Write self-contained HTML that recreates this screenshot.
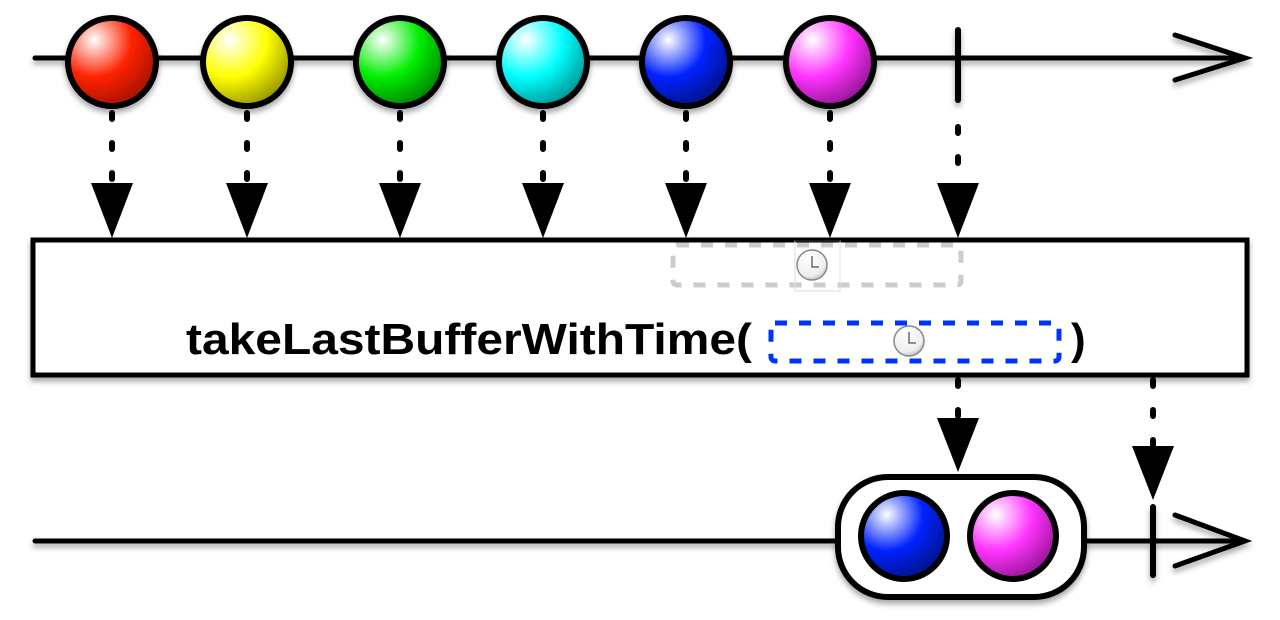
<!DOCTYPE html><html><head><style>html,body{margin:0;padding:0;background:#fff}svg{display:block}</style></head><body>
<svg width="1280" height="620" viewBox="0 0 1280 620" xmlns="http://www.w3.org/2000/svg">
<defs>
<filter id="sh" x="-20%" y="-20%" width="140%" height="160%"><feDropShadow dx="0" dy="4" stdDeviation="3" flood-opacity="0.35"/></filter>
<radialGradient id="gr" cx="0.3" cy="0.25" r="0.85"><stop offset="0" stop-color="#fff"/><stop offset="0.5" stop-color="#ff2200"/><stop offset="1" stop-color="#991100"/></radialGradient>
<radialGradient id="gy" cx="0.3" cy="0.25" r="0.85"><stop offset="0" stop-color="#fff"/><stop offset="0.5" stop-color="#ffff00"/><stop offset="1" stop-color="#888800"/></radialGradient>
<radialGradient id="gg" cx="0.3" cy="0.25" r="0.85"><stop offset="0" stop-color="#fff"/><stop offset="0.5" stop-color="#00ee00"/><stop offset="1" stop-color="#007700"/></radialGradient>
<radialGradient id="gc" cx="0.3" cy="0.25" r="0.85"><stop offset="0" stop-color="#fff"/><stop offset="0.5" stop-color="#00ffff"/><stop offset="1" stop-color="#008888"/></radialGradient>
<radialGradient id="gb" cx="0.3" cy="0.25" r="0.85"><stop offset="0" stop-color="#fff"/><stop offset="0.5" stop-color="#0022ff"/><stop offset="1" stop-color="#001177"/></radialGradient>
<radialGradient id="gm" cx="0.3" cy="0.25" r="0.85"><stop offset="0" stop-color="#fff"/><stop offset="0.5" stop-color="#ff33ff"/><stop offset="1" stop-color="#881188"/></radialGradient>
<radialGradient id="gk" cx="0.4" cy="0.3" r="0.8"><stop offset="0" stop-color="#fff"/><stop offset="0.7" stop-color="#eee"/><stop offset="1" stop-color="#aaa"/></radialGradient>
</defs>
<g stroke="#000" stroke-width="5" fill="none" stroke-linecap="round" filter="url(#sh)">
<line x1="35" y1="58" x2="1245" y2="58"/>
<polyline points="1175,35 1245,58 1175,80"/>
<line x1="958" y1="30" x2="958" y2="100" stroke-width="6"/>
</g>
<g stroke="#000" stroke-width="6" filter="url(#sh)">
<circle cx="112" cy="62" r="44" fill="url(#gr)"/>
<circle cx="247" cy="62" r="44" fill="url(#gy)"/>
<circle cx="400" cy="62" r="44" fill="url(#gg)"/>
<circle cx="543" cy="62" r="44" fill="url(#gc)"/>
<circle cx="686" cy="62" r="44" fill="url(#gb)"/>
<circle cx="830" cy="62" r="44" fill="url(#gm)"/>
</g>
<g stroke="#000" stroke-width="6" stroke-linecap="round" stroke-dasharray="6 24">
<line x1="112" y1="113" x2="112" y2="180"/><line x1="247" y1="113" x2="247" y2="180"/>
<line x1="400" y1="113" x2="400" y2="180"/><line x1="543" y1="113" x2="543" y2="180"/>
<line x1="686" y1="113" x2="686" y2="180"/><line x1="830" y1="113" x2="830" y2="180"/>
<line x1="958" y1="127" x2="958" y2="180"/>
<line x1="958" y1="380" x2="958" y2="418"/>
<line x1="1153" y1="380" x2="1153" y2="445"/>
</g>
<g fill="#000">
<polygon points="91,183 133,183 112,238"/><polygon points="226,183 268,183 247,238"/>
<polygon points="379,183 421,183 400,238"/><polygon points="522,183 564,183 543,238"/>
<polygon points="665,183 707,183 686,238"/><polygon points="809,183 851,183 830,238"/>
<polygon points="937,183 979,183 958,238"/>
<polygon points="937,418 979,418 958,472"/>
<polygon points="1132,446 1174,446 1153,500"/>
</g>
<rect x="33" y="240" width="1214" height="135" fill="#fff" stroke="#000" stroke-width="5" filter="url(#sh)"/>
<rect x="673" y="245" width="288" height="40" rx="4" fill="none" stroke="#ccc" stroke-width="5" stroke-dasharray="12 12"/>
<rect x="795" y="241" width="45" height="50" fill="none" stroke="#ddd" stroke-width="1"/>
<line x1="795" y1="241" x2="840" y2="241" stroke="#333" stroke-width="1"/>
<circle cx="812" cy="265" r="15" fill="url(#gk)" stroke="#888" stroke-width="1.5"/>
<polyline points="812,256 812,267 819,267" fill="none" stroke="#555" stroke-width="1.3"/>
<text x="186" y="354" font-family="Liberation Sans, sans-serif" font-weight="bold" font-size="44" fill="#000" textLength="566" lengthAdjust="spacingAndGlyphs">takeLastBufferWithTime(</text>
<text x="1071" y="354" font-family="Liberation Sans, sans-serif" font-weight="bold" font-size="44" fill="#000">)</text>
<rect x="771" y="323" width="288" height="38" rx="4" fill="none" stroke="#0033ff" stroke-width="5" stroke-dasharray="12 12"/>
<circle cx="909" cy="341" r="15" fill="url(#gk)" stroke="#888" stroke-width="1.5"/>
<polyline points="909,332 909,343 916,343" fill="none" stroke="#555" stroke-width="1.3"/>
<g stroke="#000" stroke-width="5" fill="none" stroke-linecap="round" filter="url(#sh)">
<line x1="35" y1="541" x2="1245" y2="541"/>
<polyline points="1175,515 1245,541 1175,566"/>
<line x1="1153" y1="507" x2="1153" y2="575" stroke-width="6"/>
</g>
<rect x="838" y="477" width="246" height="120" rx="50" fill="#fff" stroke="#000" stroke-width="6" filter="url(#sh)"/>
<g stroke="#000" stroke-width="6">
<circle cx="904" cy="536" r="43" fill="url(#gb)"/>
<circle cx="1013" cy="536" r="43" fill="url(#gm)"/>
</g>
</svg>
</body></html>
